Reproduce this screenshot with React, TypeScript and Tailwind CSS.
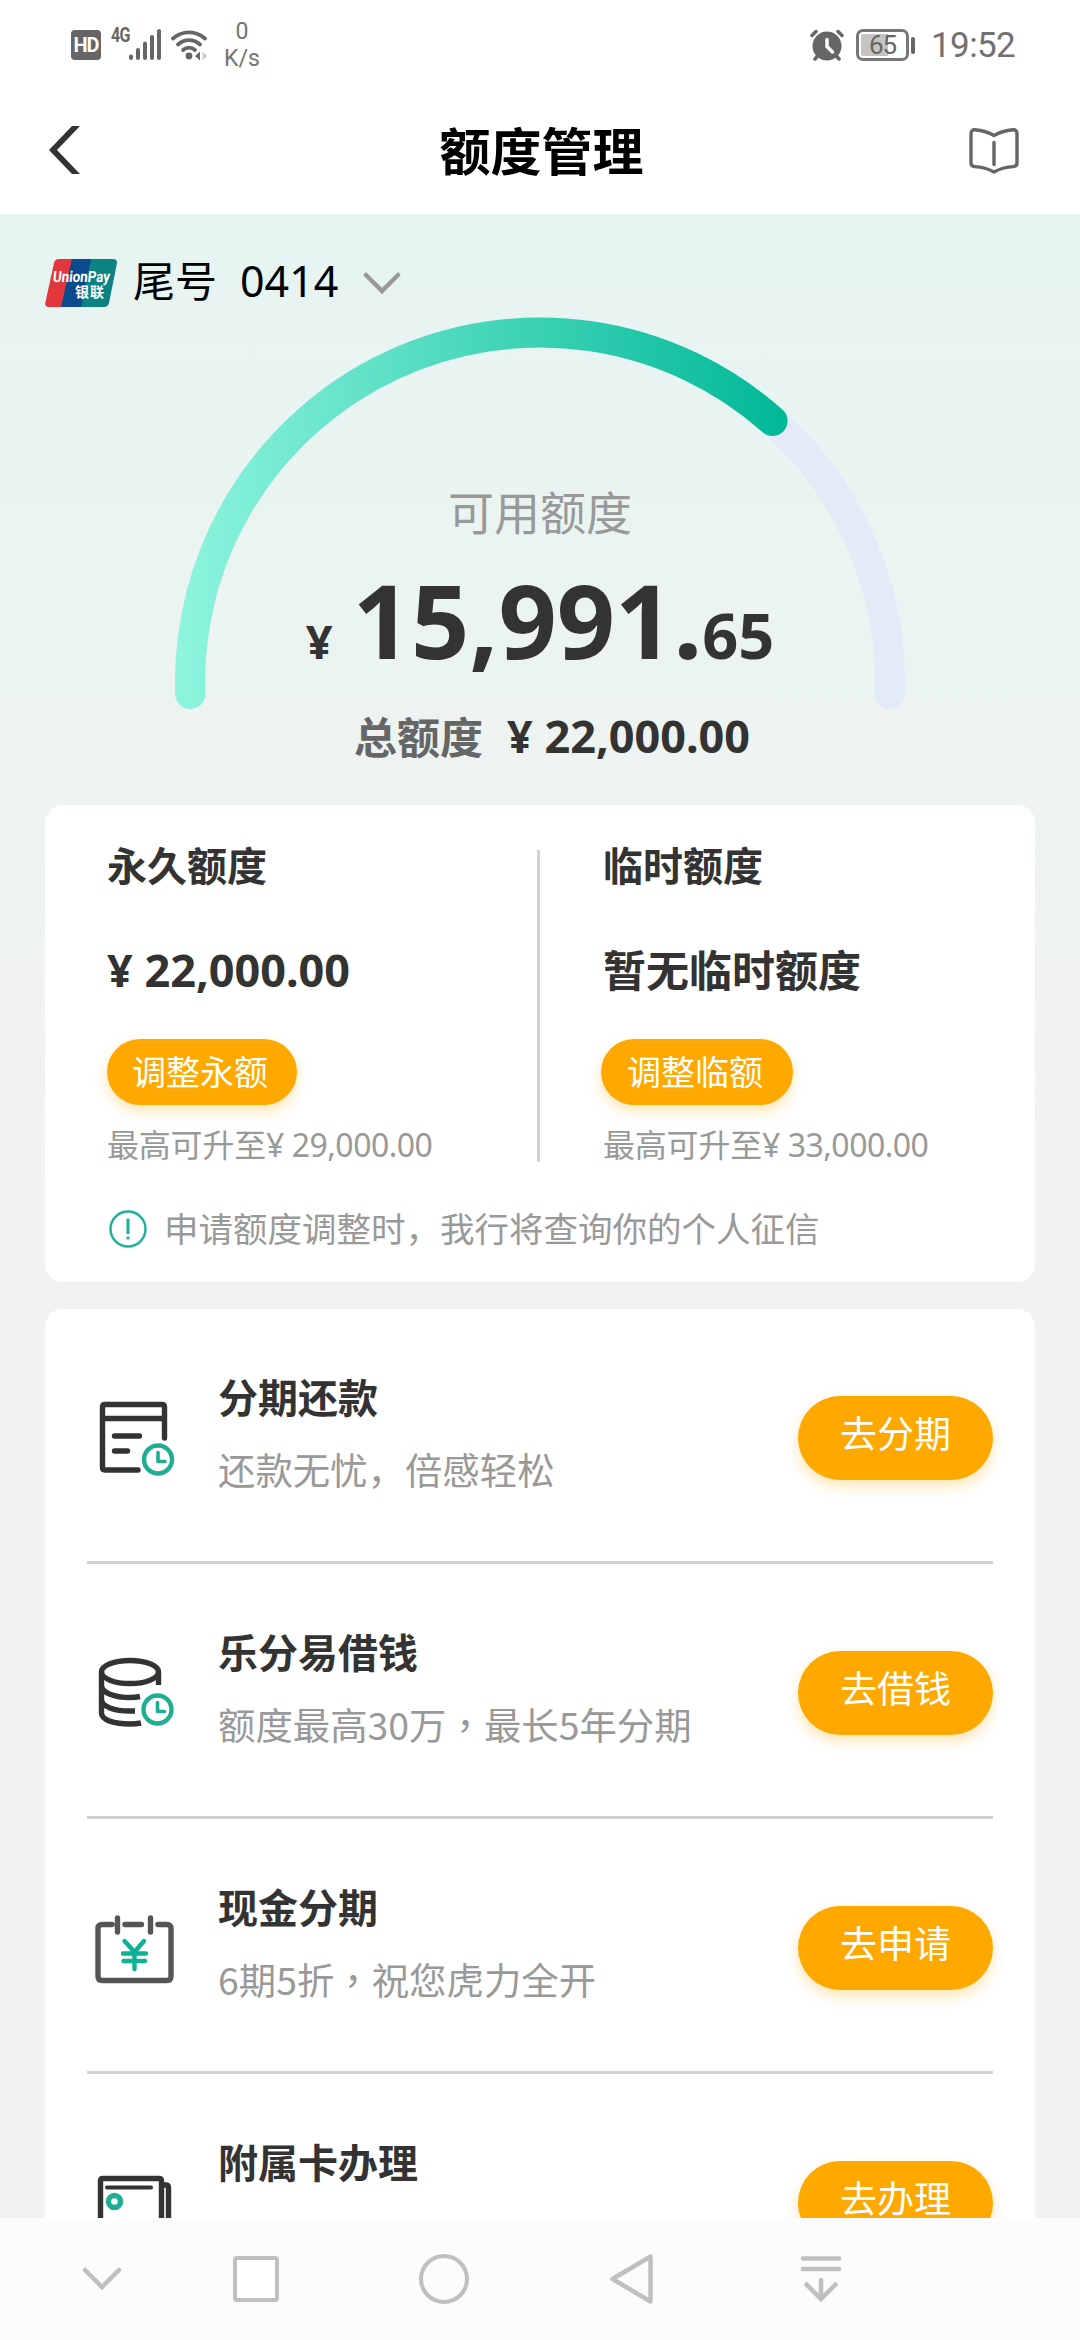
import type { ReactNode } from 'react';

function StatusBar() {
    return (
        <div className="flex h-[90px] items-center justify-between pl-[71px] pr-[65px] font-['Roboto','Noto_Sans_CJK_SC',sans-serif] text-[#666666]">
            <div className="flex items-center">
                <div className="flex h-[30px] w-[30px] items-center justify-center rounded-[4px] bg-[#666666] text-[20px] font-bold leading-none tracking-[-1px] text-white">HD</div>
                <span className="ml-[10px] mb-[20px] w-[18px] origin-left scale-x-80 text-[20px] font-bold leading-none tracking-[-1px]">4G</span>
                <svg className="h-[32px] w-[32px]" viewBox="0 0 32 32" stroke="#666666" strokeWidth="4" strokeLinecap="round">
                    <path d="M2 27.5V29M9 21V29M16 14.500V29M23 8V29M30 2V29" />
                </svg>
                <svg className="ml-[10px] h-[32px] w-[38px]" viewBox="0 0 38 32" fill="none" stroke="#666666" strokeWidth="3.8" strokeLinecap="round">
                    <path d="M2 9.500A24 24 0 0 1 34 9.500" />
                    <path d="M7 15.500A16 16 0 0 1 29 15.500" />
                    <path d="M12 21A9 9 0 0 1 24 21" />
                    <circle cx="18" cy="27" r="3.400" fill="#666666" stroke="none" />
                    <path d="M29 22.500V31.500L24 27Z" fill="#666666" stroke="none" />
                    <path d="M31.500 22.500V31.500L36.500 27Z" fill="#cccccc" stroke="none" />
                </svg>
                <div className="ml-[15px] flex w-[36px] flex-col items-center text-[23px] leading-[27px] text-[#757575]">
                    <span>0</span>
                    <span>K/s</span>
                </div>
            </div>
            <div className="flex items-center">
                <svg className="h-[32px] w-[34px]" viewBox="0 0 34 32" fill="none" stroke="#666666" strokeWidth="3.500" strokeLinecap="round">
                    <circle cx="17" cy="17" r="14.500" fill="#666666" stroke="none" />
                    <path d="M2 6.500L6 2.500M32 6.500L28 2.500M5 30L8 26.500M29 30L26 26.500" />
                    <path d="M17 10.500V17.500L22.500 23" stroke="#ffffff" />
                </svg>
                <div className="ml-[12px] flex h-[32px] w-[53px] items-center justify-center rounded-[7px] border-[3px] border-[#777777] bg-linear-to-r from-[#c4c4c4] from-62% to-white to-62% text-[26px] leading-none tracking-[-1px] ring-2 ring-inset ring-white">65</div>
                <div className="ml-[2px] h-[17px] w-[4px] rounded-full bg-[#666666]"></div>
                <span className="ml-[16px] w-[84px] text-[35px] leading-none tracking-[-0.6px] text-[#707070]">19:52</span>
            </div>
        </div>
    );
}

function Header() {
    return (
        <div className="flex h-[124px] items-center justify-between pl-[49px] pr-[61px] pb-[2px]">
            <svg className="mt-[-2px] h-[48px] w-[65px]" viewBox="0 0 65 48">
                <path d="M23 0H31L8 24L31 48H23L0 24Z" fill="#333333" />
            </svg>
            <h1 className="mb-[4px] text-[51px] font-bold leading-[60px] text-black">额度管理</h1>
            <svg className="h-[46px] w-[50px]" viewBox="0 0 50 46" fill="none" stroke="#666666" strokeWidth="3.400" strokeLinecap="round" strokeLinejoin="round">
                <path d="M25 7.500C19 4 13 2.500 6 1.800Q2 1.700 2 5.500V35Q2 38.400 5.500 38.600C13 39 19 40.500 25 44C31 40.500 37 39 44.500 38.600Q48 38.400 48 35V5.500Q48 1.700 44 1.800C37 2.500 31 4 25 7.500Z" />
                <path d="M25 14.500V36.500" />
            </svg>
        </div>
    );
}

function UnionPayLogo() {
    return (
        <svg className="h-[48px] w-[72px]" viewBox="0 0 72 48">
            <path d="M14 0H30L20 48H4Q-1 48 0.500 43L9 4Q10 0 14 0Z" fill="#e2373d" />
            <path d="M27 0H48L38 48H16Z" fill="#0b4a8c" />
            <path d="M46 0H68Q73 0 71.800 5L64 44Q63 48 59 48H36Z" fill="#0c8285" />
            <text x="9" y="23" fill="#ffffff" fontFamily="Roboto" fontSize="15.500" fontWeight="700" transform="skewX(-6) translate(1 0)" textLength="57" lengthAdjust="spacingAndGlyphs">UnionPay</text>
            <text x="30" y="37.500" fill="#ffffff" fontFamily="Noto Sans CJK SC" fontSize="14" fontWeight="700" textLength="29">银联</text>
        </svg>
    );
}

function Gauge() {
    return (
        <div className="relative mx-auto flex h-[488px] w-[730px] flex-col items-center pt-[163px]">
            <svg className="absolute inset-x-0 top-0 h-[392px] w-[730px]" viewBox="175 317 730 392" fill="none" strokeWidth="30" strokeLinecap="round">
                <defs>
                    <linearGradient id="limit" gradientUnits="userSpaceOnUse" x1="176" y1="0" x2="787" y2="0">
                        <stop offset="0" stopColor="#8ef5de" />
                        <stop offset="1" stopColor="#00b896" />
                    </linearGradient>
                </defs>
                <path d="M190.200 694A350 350 0 1 1 889.800 694" stroke="#e5eaf8" />
                <path d="M190.200 694A350 350 0 0 1 772.600 421" stroke="url(#limit)" />
            </svg>
            <p className="text-[46px] leading-[60px] text-[#999999]">可用额度</p>
            <p className="mt-[20px] flex h-[120px] items-baseline font-['Noto_Sans','Noto_Sans_CJK_SC',sans-serif] font-bold leading-[120px] text-[#333333]">
                <span className="text-[47px]">¥</span>
                <span className="ml-[20px] text-[102px]">15,991.</span>
                <span className="text-[63px]">65</span>
            </p>
            <p className="mt-[23px] flex w-full items-center pl-[179px] leading-[60px] font-bold">
                <span className="text-[43px] text-[#666666]">总额度</span>
                <span className="ml-[24px] mt-[3px] font-['Noto_Sans','Noto_Sans_CJK_SC',sans-serif] text-[45px] text-[#333333]">¥ 22,000.00</span>
            </p>
        </div>
    );
}

function LimitColumn({ title, amount, action, max, numeric }: { title: string; amount: string; action: string; max: string; numeric?: boolean }) {
    return (
        <div className="flex flex-col items-start text-[#333333]">
            <h2 className="text-[40px] font-bold leading-[60px]">{title}</h2>
            <p className={`font-bold leading-[60px] ${numeric ? "mt-[46px] mb-[39px] font-['Noto_Sans','Noto_Sans_CJK_SC',sans-serif] text-[45px]" : 'mt-[44px] mb-[41px] text-[43px]'}`}>{amount}</p>
            <button className={`h-[66px] rounded-full bg-[#ffa800] pb-[2px] text-[34px] leading-[60px] text-white shadow-[0_6px_14px_rgba(255,168,0,0.3)] ${numeric ? 'w-[190px] pr-[4px]' : '-ml-[2px] w-[192px] pr-[4px]'}`}>{action}</button>
            <p className="mt-[14px] whitespace-nowrap text-[32px] leading-[48px] tracking-[-0.2px] text-[#999999]">
                最高可升至<span className="font-['Noto_Sans','Noto_Sans_CJK_SC',sans-serif] tracking-[-0.5px]">¥ {max}</span>
            </p>
        </div>
    );
}

function LimitCard() {
    return (
        <section className="mx-[45px] h-[477px] rounded-[18px] bg-white pt-[29px]">
            <div className="grid grid-cols-[430px_66px_1fr] pl-[62px]">
                <LimitColumn title="永久额度" amount="¥ 22,000.00" action="调整永额" max="29,000.00" numeric />
                <div className="mt-[16px] h-[312px] w-[3px] bg-[#d2d2d2]"></div>
                <LimitColumn title="临时额度" amount="暂无临时额度" action="调整临额" max="33,000.00" />
            </div>
            <div className="mt-[33px] flex items-center pl-[64px]">
                <svg className="h-[38px] w-[38px]" viewBox="0 0 38 38" fill="none" stroke="#1fb095" strokeWidth="2.400">
                    <circle cx="19" cy="19" r="17.500" />
                    <path d="M19 8.500V24M19 26.500V29.500" strokeWidth="3" />
                </svg>
                <p className="ml-[17px] mb-[4px] text-[34.5px] leading-[50px] text-[#999999]">申请额度调整时，我行将查询你的个人征信</p>
            </div>
        </section>
    );
}

function Clock({ x, y }: { x: number; y: number }) {
    return (
        <g stroke="#1fae92">
            <circle cx={x} cy={y} r="14" strokeWidth="4.400" />
            <path d={`M${x} ${y - 7}V${y + 2}H${x + 7}`} strokeWidth="3.600" />
        </g>
    );
}

// every icon shares the same 80px box
function RowIcon({ children }: { children: ReactNode }) {
    return (
        <svg className="mt-[5px] h-[80px] w-[80px] shrink-0" viewBox="0 0 80 80" fill="none" stroke="#333333" strokeWidth="5.4" strokeLinecap="round" strokeLinejoin="round">
            {children}
        </svg>
    );
}

const rows = [
    {
        title: '分期还款',
        desc: '还款无忧，倍感轻松',
        action: '去分期',
        icon: (
            <RowIcon>
                <path d="M43 72H10Q7.500 72 7.500 69.500V9Q7.500 6.500 10 6.500H67Q69.500 6.500 69.500 9V40M7.500 20.500H69" />
                <path d="M19.500 38H44.500M19.500 53H32.500" />
                <Clock x={63} y={61.5} />
            </RowIcon>
        ),
    },
    {
        title: '乐分易借钱',
        desc: (
            <>
                额度最高30万<span className="font-['Noto_Sans_CJK_TC']">，</span>最长5年分期
            </>
        ),
        action: '去借钱',
        icon: (
            <RowIcon>
                <ellipse cx="35" cy="19" rx="28.500" ry="11.500" />
                <path d="M6.500 19V60C6.500 67 19 71 35 71Q41 71 46 70M63.500 19V32" strokeLinecap="butt" />
                <path d="M6.500 33C7 39.500 19 44.500 35 44.500Q40 44.500 45 43.500M6.500 47C7 53.500 19 58 35 58H40" strokeLinecap="butt" />
                <Clock x={62.5} y={56.5} />
            </RowIcon>
        ),
    },
    {
        title: '现金分期',
        desc: (
            <>
                6期5折<span className="font-['Noto_Sans_CJK_TC']">，</span>祝您虎力全开
            </>
        ),
        action: '去申请',
        icon: (
            <RowIcon>
                <path d="M17 16.500H7.500Q3 16.500 3 20.500V68.500Q3 72.500 7.500 72.500H71.500Q76 72.500 76 68.500V20.500Q76 16.500 71.500 16.500H63M30 16.500H46.500M22.500 10V24M55.500 10V24" stroke="#555555" />
                <path d="M29.500 33L39.500 44L49 33M28 45.500H51M28.500 53H50M39.500 44V61" stroke="#0cb294" strokeWidth="4.4" />
            </RowIcon>
        ),
    },
    {
        title: '附属卡办理',
        desc: '亲朋好友',
        action: '去办理',
        icon: (
            <RowIcon>
                <path d="M5.500 70V18Q5.500 15.500 8 15.500H64Q66.500 15.500 66.500 18V70M68 22H71Q73.500 22 73.500 25V72" />
                <path d="M12 24.500H56" strokeWidth="4" />
                <circle cx="19.500" cy="38.500" r="6" stroke="#1fae92" />
            </RowIcon>
        ),
    },
];

function ServiceList() {
    return (
        <section className="mx-[45px] mt-[27px] rounded-t-[18px] bg-white px-[42px]">
            {rows.map((row) => (
                <div key={row.action} className="flex h-[255px] items-center border-b-[3px] border-[#d2d2d2] pl-[8px]">
                    {row.icon}
                    <div className="ml-[43px] mb-[6px] flex-1 whitespace-nowrap">
                        <h3 className="text-[40px] font-bold leading-[60px] text-[#333333]">{row.title}</h3>
                        <p className="mt-[13px] text-[37.4px] leading-[60px] text-[#999999]">{row.desc}</p>
                    </div>
                    <button className="mt-[5px] h-[84px] w-[195px] rounded-full bg-[#ffa800] pb-[11px] text-[37px] leading-[73px] text-white shadow-[0_6px_14px_rgba(255,168,0,0.3)]">{row.action}</button>
                </div>
            ))}
        </section>
    );
}

function NavBar() {
    return (
        <nav className="flex h-[122px] shrink-0 items-center bg-[#fcfcfc]">
            <div className="flex w-[162px] justify-center pl-[42px]">
                <svg className="h-[54px] w-[54px]" viewBox="0 0 54 54" fill="none" stroke="#bfbfbf" strokeWidth="4.500" strokeLinecap="round">
                    <path d="M10 18L27 35L44 18" />
                </svg>
            </div>
            <div className="flex w-[188px] justify-center">
                <div className="h-[46px] w-[46px] rounded-[4px] border-4 border-[#bfbfbf] bg-white"></div>
            </div>
            <div className="flex w-[188px] justify-center">
                <div className="h-[50px] w-[50px] rounded-full border-4 border-[#bfbfbf]"></div>
            </div>
            <div className="flex w-[188px] justify-center">
                <svg className="h-[54px] w-[54px]" viewBox="0 0 54 54" fill="none" stroke="#bfbfbf" strokeWidth="4.500" strokeLinejoin="round">
                    <path d="M45.500 4.500V49.500L7.500 27Z" />
                </svg>
            </div>
            <div className="flex w-[188px] justify-center">
                <svg className="h-[54px] w-[54px]" viewBox="0 0 54 54" fill="none" stroke="#bfbfbf" strokeWidth="4.500" strokeLinecap="round">
                    <path d="M10 6.500H46M10 17H46M28 28V46M13.500 32.500L28 47L42.500 32.500" />
                </svg>
            </div>
        </nav>
    );
}

export default function App() {
    return (
        <div className="flex h-[2340px] w-[1080px] flex-col overflow-hidden bg-white font-['Noto_Sans_CJK_SC',sans-serif]">
            <StatusBar />
            <Header />
            <main className="min-h-0 flex-1 overflow-hidden bg-linear-to-b from-[#e6f5f1] to-[#f2f2f2] to-50%">
                <div className="flex h-[103px] items-center pb-[2px] pl-[45px] pt-[36px]">
                    <UnionPayLogo />
                    <span className="ml-[16px] mb-[7px] text-[42px] leading-[60px] text-black">尾号</span>
                    <span className="ml-[23px] mb-[4px] font-['Noto_Sans',sans-serif] text-[43px] leading-[60px] text-black">0414</span>
                    <svg className="ml-[25px] h-[22px] w-[38px]" viewBox="0 0 38 22" fill="none" stroke="#999999" strokeWidth="4.500" strokeLinecap="round">
                        <path d="M3 3L19 19L35 3" />
                    </svg>
                </div>
                <Gauge />
                <LimitCard />
                <ServiceList />
            </main>
            <NavBar />
        </div>
    );
}
